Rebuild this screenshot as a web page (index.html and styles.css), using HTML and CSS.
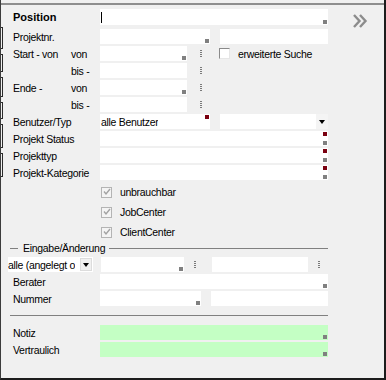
FILE: index.html
```html
<!DOCTYPE html>
<html lang="de">
<head>
    <meta charset="UTF-8">
    <title>Projektsuche</title>
    <link rel="stylesheet" href="styles.css">
</head>
<body>
    <div class="frame">
        <div class="topline"></div>
        <div class="frame-body">
            <div class="edge">
                <span class="seg" style="height: 22px;"></span>
                <span class="seg" style="height: 18px;"></span>
                <span class="seg" style="height: 20px;"></span>
                <span class="seg" style="height: 17px;"></span>
                <span class="seg" style="height: 24px;"></span>
                <span class="seg" style="height: 24px;"></span>
            </div>
            <div class="main">
                <div class="form">
                    <div class="row row-pos">
                        <div class="lbl bold">Position</div>
                        <div class="field w-full"><span class="caret"></span><span class="mk"></span></div>
                    </div>
                    <div class="row">
                        <div class="lbl">Projektnr.</div>
                        <div class="field w-half"><span class="mk"></span></div>
                        <div class="field w-right"></div>
                    </div>
                    <div class="row">
                        <div class="lbl-main">Start - von</div>
                        <div class="lbl-sub">von</div>
                        <div class="field w-date"><span class="mk"></span></div>
                        <span class="dots"></span>
                        <span class="check"></span>
                        <span class="check-text">erweiterte Suche</span>
                    </div>
                    <div class="row">
                        <div class="lbl-main"></div>
                        <div class="lbl-sub">bis -</div>
                        <div class="field w-date"></div>
                        <span class="dots"></span>
                    </div>
                    <div class="row">
                        <div class="lbl-main">Ende -</div>
                        <div class="lbl-sub">von</div>
                        <div class="field w-date"><span class="mk"></span></div>
                        <span class="dots"></span>
                    </div>
                    <div class="row">
                        <div class="lbl-main"></div>
                        <div class="lbl-sub">bis -</div>
                        <div class="field w-date"></div>
                        <span class="dots"></span>
                    </div>
                    <div class="row">
                        <div class="lbl">Benutzer/Typ</div>
                        <div class="field w-half"><span class="val">alle Benutzer</span><span class="mk red"></span></div>
                        <div class="field w-right combo"><span class="drop"><i class="tri"></i></span></div>
                    </div>
                    <div class="row">
                        <div class="lbl">Projekt Status</div>
                        <div class="field w-full"><span class="mk red"></span><span class="mk"></span></div>
                    </div>
                    <div class="row">
                        <div class="lbl">Projekttyp</div>
                        <div class="field w-full"><span class="mk red"></span><span class="mk"></span></div>
                    </div>
                    <div class="row">
                        <div class="lbl">Projekt-Kategorie</div>
                        <div class="field w-full"><span class="mk red"></span><span class="mk"></span></div>
                    </div>

                    <div class="opt first">
                        <span class="box-off"><svg width="8" height="8" viewBox="0 0 8 8"><polyline points="1,3.5 3,6 7,1" fill="none" stroke="#a3a3a3" stroke-width="1.4"/></svg></span>
                        <span>unbrauchbar</span>
                    </div>
                    <div class="opt">
                        <span class="box-off"><svg width="8" height="8" viewBox="0 0 8 8"><polyline points="1,3.5 3,6 7,1" fill="none" stroke="#a3a3a3" stroke-width="1.4"/></svg></span>
                        <span>JobCenter</span>
                    </div>
                    <div class="opt">
                        <span class="box-off"><svg width="8" height="8" viewBox="0 0 8 8"><polyline points="1,3.5 3,6 7,1" fill="none" stroke="#a3a3a3" stroke-width="1.4"/></svg></span>
                        <span>ClientCenter</span>
                    </div>

                    <div class="sep">
                        <span class="sep-a"></span>
                        <span class="sep-text">Eingabe/Änderung</span>
                        <span class="sep-b"></span>
                    </div>

                    <div class="row row-combo">
                        <div class="field small-combo"><span class="val">alle (angelegt o</span><span class="drop btn"><i class="tri"></i></span></div>
                        <div class="field w-from"><span class="mk"></span></div>
                        <span class="dots d-a"></span>
                        <div class="field w-to"></div>
                        <span class="dots d-b"></span>
                    </div>
                    <div class="row row-berater">
                        <div class="lbl">Berater</div>
                        <div class="field w-full"><span class="mk"></span></div>
                    </div>
                    <div class="row row-nummer">
                        <div class="lbl">Nummer</div>
                        <div class="field w-num"><span class="mk"></span></div>
                        <div class="field w-num2"></div>
                    </div>

                    <div class="rule"></div>

                    <div class="row row-notiz">
                        <div class="lbl">Notiz</div>
                        <div class="field w-full green"><span class="mk"></span></div>
                    </div>
                    <div class="row row-vertr">
                        <div class="lbl">Vertraulich</div>
                        <div class="field w-full green"><span class="mk"></span></div>
                    </div>
                </div>
                <div class="side">
                    <svg width="16" height="16" viewBox="0 0 16 16">
                        <polyline points="2,2 7.5,8 2,14" fill="none" stroke="#8c8c8c" stroke-width="2.4"/>
                        <polyline points="8,2 13.5,8 8,14" fill="none" stroke="#8c8c8c" stroke-width="2.4"/>
                    </svg>
                </div>
            </div>
        </div>
    </div>
</body>
</html>
```

FILE: styles.css
```css
* {
    box-sizing: border-box;
}
body {
    margin: 0;
    background-color: #f0f0f0;
    font-family: "Liberation Sans", Arial, sans-serif;
    font-size: 10.5px;
    letter-spacing: -0.3px;
    color: #000;
}
.frame {
    width: 386px;
    height: 380px;
    padding-top: 3px;
    border-left: 1px solid #3c3c3c;
    border-right: 2px solid #1c1c1c;
    border-bottom: 2px solid #1c1c1c;
    display: flex;
    flex-direction: column;
}
.topline {
    height: 2px;
    background-color: #8e8e8e;
}
.frame-body {
    flex: 1;
    display: flex;
}
.edge {
    width: 3px;
    padding-top: 22px;
    display: flex;
    flex-direction: column;
    gap: 5px;
}
.seg {
    display: block;
    border-top: 1px solid #2a2a2a;
    border-bottom: 1px solid #2a2a2a;
    border-right: 1px solid #2a2a2a;
    width: 2px;
}
.main {
    flex: 1;
    display: flex;
    padding-left: 4px;
}
.form {
    width: 320px;
    padding-top: 4px;
}
.side {
    margin-left: 24px;
    padding-top: 8px;
}
.row {
    display: flex;
    align-items: center;
    height: 15px;
    margin-bottom: 2px;
}
.row-pos {
    height: 16px;
    margin-bottom: 4px;
}
.lbl {
    width: 92px;
    padding-left: 5px;
    white-space: nowrap;
}
.bold {
    font-weight: bold;
    font-size: 11px;
    letter-spacing: 0;
}
.lbl-main {
    width: 63px;
    padding-left: 5px;
    white-space: nowrap;
}
.lbl-sub {
    width: 29px;
    white-space: nowrap;
}
.field {
    position: relative;
    height: 100%;
    background-color: #fff;
    display: flex;
    align-items: center;
}
.w-full { width: 228px; }
.w-half { width: 110px; }
.w-right { width: 108px; margin-left: 10px; }
.w-date { width: 87px; }
.w-from { width: 83px; margin-left: 8px; }
.w-to { width: 96px; margin-left: 16px; }
.w-num { width: 101px; }
.w-num2 { width: 117px; margin-left: 10px; }
.green {
    background-color: #c4ffc4;
}
.caret {
    width: 1px;
    height: 11px;
    margin-left: 1px;
    background-color: #000;
}
.val {
    padding-left: 1px;
    white-space: nowrap;
    overflow: hidden;
}
.mk {
    position: absolute;
    right: 1px;
    bottom: 1px;
    width: 4px;
    height: 4px;
    background-color: #808080;
}
.mk.red {
    top: 1px;
    bottom: auto;
    background-color: #7a0010;
}
.dots {
    width: 2px;
    height: 8px;
    margin-left: 13px;
    background: repeating-linear-gradient(#7a7a7a 0 1px, transparent 1px 2px);
}
.dots.d-a { margin-left: 10px; }
.dots.d-b { margin-left: 10px; }
.check {
    width: 11px;
    height: 11px;
    margin-left: 17px;
    background-color: #fff;
    border-top: 1px solid #8a8a8a;
    border-left: 1px solid #8a8a8a;
    border-right: 1px solid #e6e6e6;
    border-bottom: 1px solid #e6e6e6;
}
.check-text {
    margin-left: 8px;
    white-space: nowrap;
}
.combo .drop {
    position: absolute;
    right: 0;
    top: 0;
    width: 12px;
    height: 100%;
    display: flex;
    align-items: center;
    justify-content: center;
    background-color: #f4f4f4;
}
.tri {
    width: 0;
    height: 0;
    border-left: 3px solid transparent;
    border-right: 3px solid transparent;
    border-top: 4px solid #000;
}
.small-combo {
    width: 85px;
    justify-content: space-between;
}
.small-combo .val {
    padding-left: 0;
}
.drop.btn {
    width: 12px;
    height: 13px;
    margin-right: 1px;
    display: flex;
    align-items: center;
    justify-content: center;
    background-color: #f0f0f0;
    border: 1px solid #dcdcdc;
}
.opt {
    display: flex;
    align-items: center;
    height: 20px;
    padding-left: 93px;
}
.opt.first {
    margin-top: 1px;
}
.box-off {
    width: 11px;
    height: 11px;
    margin-right: 8px;
    border: 1px solid #b4b4b4;
    background-color: #f4f4f4;
    display: flex;
    align-items: center;
    justify-content: center;
}
.sep {
    display: flex;
    align-items: center;
    height: 12px;
    padding-left: 2px;
}
.sep-a {
    width: 8px;
    border-top: 1px solid #808080;
}
.sep-b {
    flex: 1;
    border-top: 1px solid #808080;
}
.sep-text {
    padding: 0 4px 0 5px;
    white-space: nowrap;
}
.row-combo { margin-top: 3px; }
.row-berater { margin-top: 0; }
.row-nummer { margin-top: 1px; }
.rule {
    height: 1px;
    margin: 9px 0 9px 2px;
    background-color: #808080;
}
.row-vertr { margin-top: 1px; }
```
